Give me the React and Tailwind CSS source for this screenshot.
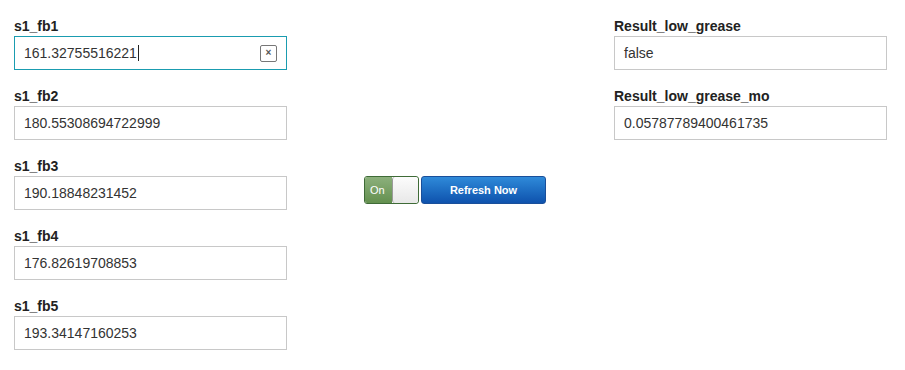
const left = [
  { label: "s1_fb1", value: "161.32755516221", focused: true },
  { label: "s1_fb2", value: "180.55308694722999" },
  { label: "s1_fb3", value: "190.18848231452" },
  { label: "s1_fb4", value: "176.82619708853" },
  { label: "s1_fb5", value: "193.34147160253" },
];

const right = [
  { label: "Result_low_grease", value: "false" },
  { label: "Result_low_grease_mo", value: "0.05787789400461735" },
];

function Field({ label, value, focused }) {
  return (
    <div className="flex flex-col">
      <div className="h-[22px] pt-[4px] text-[14px] font-bold leading-[16px] text-[#222]">{label}</div>
      <div
        className={`flex h-[34px] w-[273px] items-center border pl-[9px] pr-[9px] text-[14px] text-[#333] ${
          focused ? "border-[#1a9cb0]" : "border-[#c8c8c8]"
        }`}
      >
        <span className="flex-1">
          {value}
          {focused && <span className="ml-[1px] inline-block h-[16px] w-px translate-y-[3px] bg-[#222]" />}
        </span>
        {focused && (
          <span className="flex h-[17px] w-[17px] items-center justify-center rounded-[2px] border border-[#777] text-[10px] font-bold leading-none text-[#555]">
            ×
          </span>
        )}
      </div>
    </div>
  );
}

export default function App() {
  return (
    <div
      className="flex h-[370px] w-[905px] bg-white pl-[14px] pt-[14px]"
      style={{ fontFamily: '"Liberation Sans", Arial, sans-serif' }}
    >
      <div className="flex flex-col gap-[14px]">
        {left.map((f) => (
          <Field key={f.label} {...f} />
        ))}
      </div>

      <div className="ml-[77px] mt-[162px] flex h-[28px] gap-[2px]">
        <div className="flex h-[28px] w-[55px] overflow-hidden rounded-[3px] border border-[#3f6b37]">
          <div className="flex w-[27px] items-center bg-gradient-to-b from-[#8cb07c] to-[#64904f] pl-[5px] text-[11px] text-white">
            On
          </div>
          <div className="flex-1 rounded-[3px] border-l border-[#9a9a9a] bg-gradient-to-b from-[#fcfcfc] to-[#e8e8e8]" />
        </div>
        <button className="h-[28px] w-[125px] rounded-[3px] border border-[#1a4f9a] bg-gradient-to-b from-[#2f8ad9] to-[#0f52ad] text-[11px] font-bold text-white">
          Refresh Now
        </button>
      </div>

      <div className="ml-[68px] flex flex-col gap-[14px]">
        {right.map((f) => (
          <Field key={f.label} {...f} />
        ))}
      </div>
    </div>
  );
}
